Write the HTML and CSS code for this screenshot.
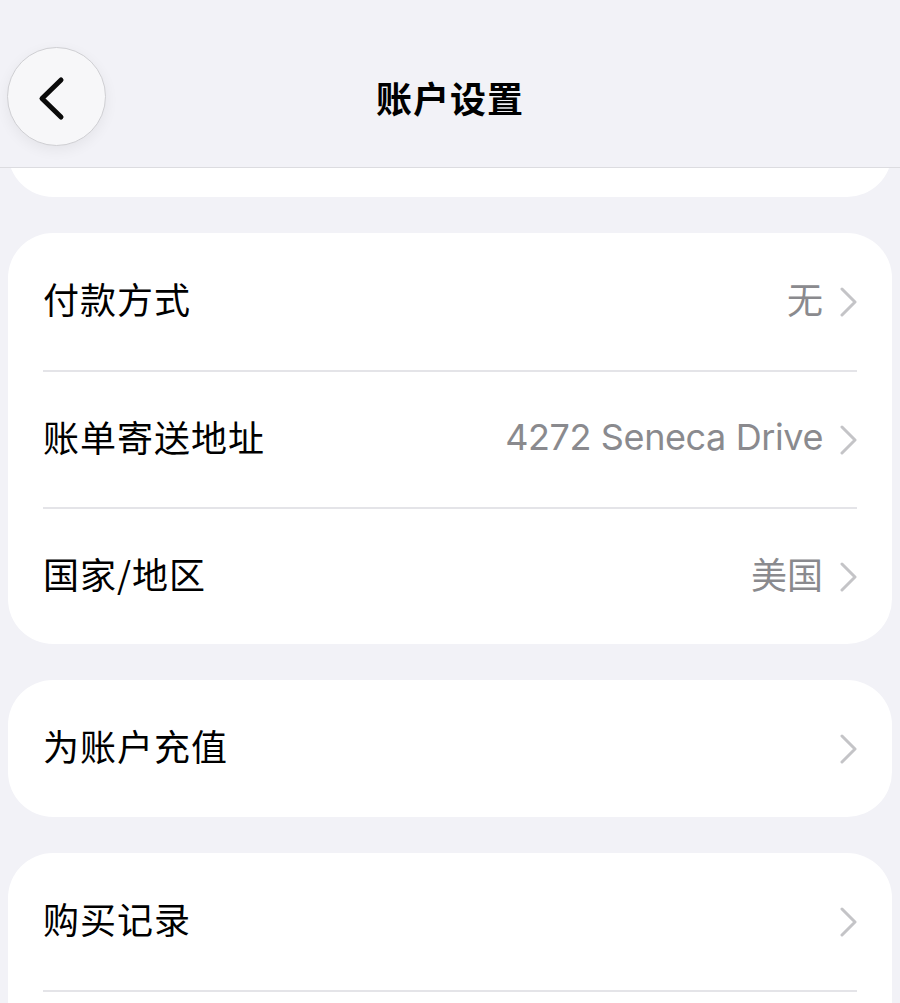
FILE: index.html
```html
<!DOCTYPE html>
<html lang="zh-CN">
<head>
<meta charset="utf-8">
<title>账户设置</title>
<link rel="stylesheet" href="styles.css">
</head>
<body>
<div class="screen">
  <header class="navbar">
    <div class="nav-row">
      <button class="back-btn" aria-label="返回">
        <svg width="40" height="50" viewBox="0 0 40 50"><polyline points="28,8 9,26.5 28,45" fill="none" stroke="#0a0a0a" stroke-width="5" stroke-linecap="round" stroke-linejoin="round"/></svg>
      </button>
      <h1 class="title">账户设置</h1>
      <span class="nav-spacer"></span>
    </div>
  </header>

  <main class="content">
    <section class="card">
      <div class="row"></div>
    </section>

    <section class="card">
      <div class="row">
        <span class="label">付款方式</span>
        <span class="value">无</span>
        <svg class="chev" width="17" height="30" viewBox="0 0 17 30"><polyline points="2,2 15,15 2,28" fill="none" stroke="#c4c4c7" stroke-width="3" stroke-linecap="round" stroke-linejoin="round"/></svg>
      </div>
      <div class="row">
        <span class="label">账单寄送地址</span>
        <span class="value latin">4272 Seneca Drive</span>
        <svg class="chev" width="17" height="30" viewBox="0 0 17 30"><polyline points="2,2 15,15 2,28" fill="none" stroke="#c4c4c7" stroke-width="3" stroke-linecap="round" stroke-linejoin="round"/></svg>
      </div>
      <div class="row">
        <span class="label">国家/地区</span>
        <span class="value">美国</span>
        <svg class="chev" width="17" height="30" viewBox="0 0 17 30"><polyline points="2,2 15,15 2,28" fill="none" stroke="#c4c4c7" stroke-width="3" stroke-linecap="round" stroke-linejoin="round"/></svg>
      </div>
    </section>

    <section class="card">
      <div class="row">
        <span class="label">为账户充值</span>
        <span class="value"></span>
        <svg class="chev" width="17" height="30" viewBox="0 0 17 30"><polyline points="2,2 15,15 2,28" fill="none" stroke="#c4c4c7" stroke-width="3" stroke-linecap="round" stroke-linejoin="round"/></svg>
      </div>
    </section>

    <section class="card">
      <div class="row">
        <span class="label">购买记录</span>
        <span class="value"></span>
        <svg class="chev" width="17" height="30" viewBox="0 0 17 30"><polyline points="2,2 15,15 2,28" fill="none" stroke="#c4c4c7" stroke-width="3" stroke-linecap="round" stroke-linejoin="round"/></svg>
      </div>
      <div class="row"></div>
    </section>
  </main>
</div>
</body>
</html>
```

FILE: styles.css
```css
* { box-sizing: border-box; }

html, body {
  margin: 0;
  padding: 0;
  background: #f2f2f7;
}

body {
  font-family: Inter, "Noto Sans CJK SC", "Noto Sans", sans-serif;
  color: #000;
}

.screen {
  position: relative;
  width: 900px;
  height: 1003px;
  overflow: hidden;
  background: #f2f2f7;
}

.navbar {
  position: absolute;
  top: 0;
  left: 0;
  right: 0;
  height: 168px;
  padding-top: 47px;
  background: #f2f2f7;
  border-bottom: 1px solid #dcdce0;
  z-index: 2;
}

.nav-row {
  display: flex;
  align-items: center;
  height: 99px;
  padding: 0 7px;
}

.back-btn {
  width: 99px;
  height: 99px;
  border-radius: 50%;
  border: 1px solid #cfcfd3;
  background: #f7f7f9;
  box-shadow: 0 4px 14px rgba(0, 0, 0, 0.06);
  display: flex;
  align-items: center;
  justify-content: center;
  padding: 0 8px 0 0;
  flex: none;
}

.title {
  flex: 1;
  margin: 0;
  text-align: center;
  font-family: "Noto Sans CJK SC", sans-serif;
  font-size: 36px;
  font-weight: 700;
  letter-spacing: 1px;
  line-height: 1;
  padding-top: 0;
}

.nav-spacer {
  width: 99px;
  flex: none;
}

.content {
  display: flex;
  flex-direction: column;
  gap: 36px;
  padding: 60px 8px 0;
}

.card {
  background: #fff;
  border-radius: 45px;
  padding: 0 35px;
}

.row {
  display: flex;
  align-items: center;
  height: 137px;
  gap: 17px;
}

.row + .row {
  border-top: 2px solid #e4e4e8;
}

.label {
  flex: 1;
  font-family: "Noto Sans CJK SC", sans-serif;
  font-size: 36px;
  letter-spacing: 1px;
  line-height: 1;
  padding-bottom: 7px;
}

.value {
  font-family: "Noto Sans CJK SC", sans-serif;
  font-size: 36px;
  color: #8a8a8e;
  line-height: 1;
  padding-bottom: 7px;
}

.value.latin {
  font-family: Inter, "Noto Sans CJK SC", sans-serif;
  font-size: 36px;
  letter-spacing: -0.4px;
  padding-bottom: 5px;
}

.chev {
  flex: none;
  display: block;
}
```
